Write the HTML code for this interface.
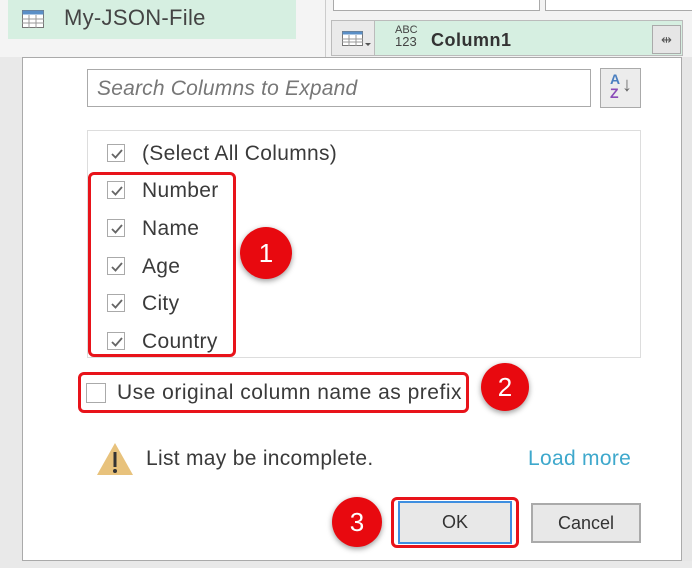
<!DOCTYPE html>
<html><head><style>
body{margin:0;width:692px;height:568px;background:#e9e9e9;position:relative;overflow:hidden;font-family:"Liberation Sans",sans-serif;color:#333}
.a{position:absolute}
.cb{position:absolute;width:18px;height:18px;border:1px solid #aaa;background:#fff;box-sizing:border-box}
.cb svg{position:absolute;left:2px;top:2px}
.t{position:absolute;font-size:21px;line-height:24px;color:#3a3a3a;letter-spacing:0.3px;white-space:nowrap}
.circ{position:absolute;border-radius:50%;background:#e8090f;color:#fff;font-size:26px;text-align:center;box-shadow:0 2px 6px rgba(0,0,0,.4)}
.red{position:absolute;border:3px solid #e8131a;border-radius:6px;box-sizing:border-box}
</style></head><body>
<div class="a" style="left:0;top:0;width:325px;height:57px;background:#f4f4f4"></div>
<div class="a" style="left:8px;top:0;width:288px;height:39px;background:#d6efe1"></div>
<svg class="a" style="left:22px;top:10px" width="22" height="18"><rect x="0.5" y="0.5" width="21" height="17" fill="#fff" stroke="#777"/><rect x="0.5" y="0.5" width="21" height="4" fill="#5a8fc7"/><path d="M7 5v13M14 5v13M0 9h22M0 13h22" stroke="#999"/></svg>
<div class="t" style="left:64px;top:6px;color:#444;font-size:22px">My-JSON-File</div>
<div class="a" style="left:325px;top:0;width:367px;height:57px;background:#f3f3f3;border-left:1px solid #ccc"></div>
<div class="a" style="left:333px;top:0;width:205px;height:10px;background:#fff;border:1px solid #aaa;border-top:none"></div>
<div class="a" style="left:545px;top:0;width:147px;height:10px;background:#fff;border:1px solid #aaa;border-top:none"></div>
<div class="a" style="left:331px;top:20px;width:352px;height:36px;background:#d6efe1;border:1px solid #bbb;box-sizing:border-box"></div>
<div class="a" style="left:332px;top:21px;width:42px;height:34px;background:#eaeaea;border-right:1px solid #bbb"></div>
<svg class="a" style="left:342px;top:31px" width="30" height="18"><rect x="0.5" y="0.5" width="20" height="14" fill="#fff" stroke="#777"/><rect x="0.5" y="0.5" width="20" height="3" fill="#5a8fc7"/><path d="M7 4v11M14 4v11M0 8h21M0 11h21" stroke="#999"/><path d="M23 12l3 3 3-3z" fill="#555"/></svg>
<div class="a" style="left:395px;top:25px;font-size:11px;line-height:11px;color:#444">ABC<br><span style="font-size:13px">123</span></div>
<div class="a" style="left:431px;top:30px;font-size:18px;font-weight:bold;color:#333;letter-spacing:0.5px">Column1</div>
<div class="a" style="left:652px;top:25px;width:29px;height:29px;background:#e6e6e6;border:1px solid #aaa;box-sizing:border-box;font-size:13px;text-align:center;line-height:27px;color:#555">⇹</div>
<div class="a" style="left:22px;top:57px;width:660px;height:504px;background:#fff;border:1px solid #aaa;box-sizing:border-box"></div>
<div class="a" style="left:682px;top:57px;width:10px;height:504px;background:#e6e6e6"></div>
<div class="a" style="left:87px;top:69px;width:504px;height:38px;border:1px solid #aaa;box-sizing:border-box"></div>
<div class="a" style="left:97px;top:77px;font-size:21px;font-style:italic;color:#777;letter-spacing:0.2px">Search Columns to Expand</div>
<div class="a" style="left:600px;top:68px;width:41px;height:40px;background:#ececec;border:1px solid #aaa;box-sizing:border-box"></div>
<div class="a" style="left:610px;top:72px;font-size:14px;font-weight:bold;line-height:14px;color:#4a7fc0">A</div>
<div class="a" style="left:610px;top:86px;font-size:14px;font-weight:bold;line-height:14px;color:#8a4bb8">Z</div>
<div class="a" style="left:622px;top:74px;font-size:20px;color:#666">↓</div>
<div class="a" style="left:87px;top:130px;width:554px;height:228px;border:1px solid #ddd;box-sizing:border-box"></div>
<div class="cb" style="left:107px;top:144px"><svg width="14" height="14"><path d="M2 7l3.5 3.5L12 3" fill="none" stroke="#666" stroke-width="1.8"/></svg></div><div class="t" style="left:142px;top:142px">(Select All Columns)</div>
<div class="cb" style="left:107px;top:181px"><svg width="14" height="14"><path d="M2 7l3.5 3.5L12 3" fill="none" stroke="#666" stroke-width="1.8"/></svg></div><div class="t" style="left:142px;top:179px">Number</div>
<div class="cb" style="left:107px;top:219px"><svg width="14" height="14"><path d="M2 7l3.5 3.5L12 3" fill="none" stroke="#666" stroke-width="1.8"/></svg></div><div class="t" style="left:142px;top:217px">Name</div>
<div class="cb" style="left:107px;top:257px"><svg width="14" height="14"><path d="M2 7l3.5 3.5L12 3" fill="none" stroke="#666" stroke-width="1.8"/></svg></div><div class="t" style="left:142px;top:255px">Age</div>
<div class="cb" style="left:107px;top:294px"><svg width="14" height="14"><path d="M2 7l3.5 3.5L12 3" fill="none" stroke="#666" stroke-width="1.8"/></svg></div><div class="t" style="left:142px;top:292px">City</div>
<div class="cb" style="left:107px;top:332px"><svg width="14" height="14"><path d="M2 7l3.5 3.5L12 3" fill="none" stroke="#666" stroke-width="1.8"/></svg></div><div class="t" style="left:142px;top:330px">Country</div>
<div class="red" style="left:88px;top:172px;width:148px;height:185px"></div>
<div class="circ" style="left:240px;top:227px;width:52px;height:52px;line-height:52px">1</div>
<div class="cb" style="left:86px;top:383px;width:20px;height:20px"></div>
<div class="t" style="left:117px;top:381px;letter-spacing:0.5px">Use original column name as prefix</div>
<div class="red" style="left:78px;top:372px;width:391px;height:41px"></div>
<div class="circ" style="left:481px;top:363px;width:48px;height:48px;line-height:48px">2</div>
<svg class="a" style="left:96px;top:442px" width="38" height="34"><path d="M19 1L37 33H1z" fill="#e8c27c"/><path d="M19 10v15" stroke="#333" stroke-width="3"/><circle cx="19" cy="29" r="2" fill="#333"/></svg>
<div class="t" style="left:146px;top:447px">List may be incomplete.</div>
<div class="t" style="left:528px;top:447px;color:#3ea8cc">Load more</div>
<div class="a" style="left:398px;top:501px;width:114px;height:43px;background:#e8e8e8;border:2px solid #3e8ee0;box-sizing:border-box;text-align:center;line-height:39px;font-size:18px;color:#333">OK</div>
<div class="red" style="left:391px;top:497px;width:128px;height:51px"></div>
<div class="a" style="left:531px;top:503px;width:110px;height:40px;background:#e8e8e8;border:2px solid #aaa;box-sizing:border-box;text-align:center;line-height:36px;font-size:18px;color:#333">Cancel</div>
<div class="circ" style="left:332px;top:497px;width:50px;height:50px;line-height:50px">3</div>
</body></html>
